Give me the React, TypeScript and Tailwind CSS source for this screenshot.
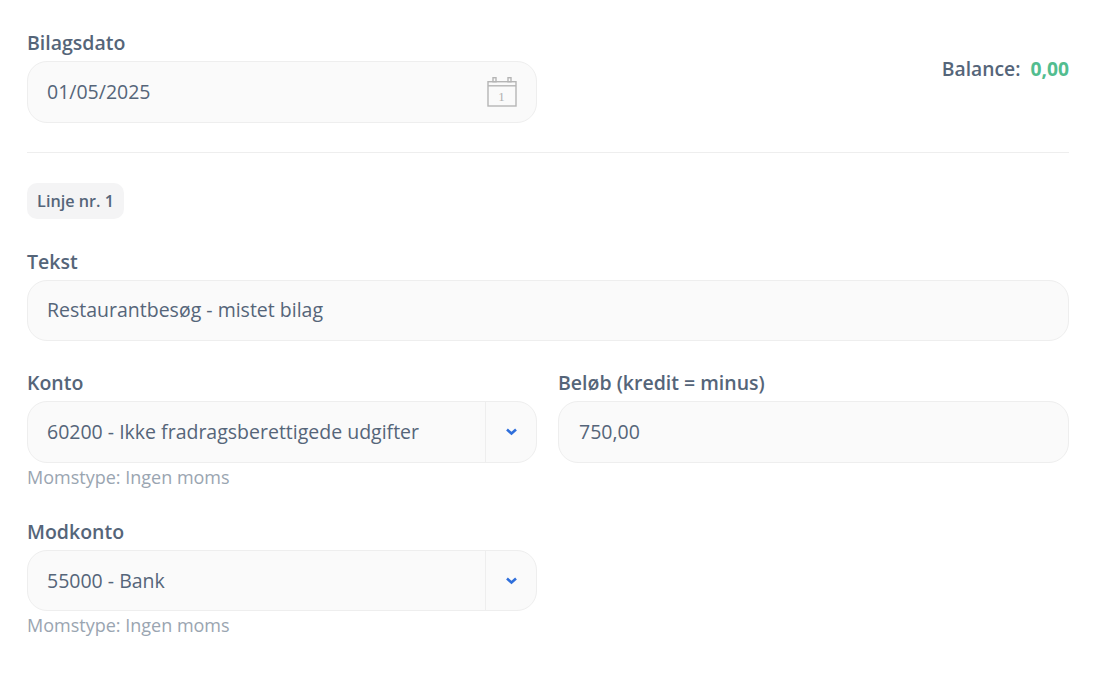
const font = "font-['Open_Sans',sans-serif]";

function Label({ children }: { children: React.ReactNode }) {
  return <label className="block h-[18px] text-[19.5px] leading-[18px] font-semibold text-[#556579]">{children}</label>;
}

function CalendarIcon() {
  return (
    <svg width="32" height="32" viewBox="0 0 32 32" fill="none" stroke="#b5b5b5" strokeWidth="1.4">
      <rect x="3" y="5.7" width="28" height="24.3" fill="#fafafa" />
      <path d="M3 9.8h28" />
      <rect x="8" y="1.7" width="3" height="4" />
      <rect x="23" y="1.7" width="3" height="4" />
      <text x="16.5" y="25" textAnchor="middle" fontFamily="'Liberation Serif', serif" fontSize="13" fill="#b0b0b0" stroke="none">1</text>
    </svg>
  );
}

function TextField({ value, icon }: { value: string; icon?: React.ReactNode }) {
  return (
    <div className="mt-[9px] flex h-[62px] items-center justify-between rounded-[20px] border border-[#eeeeee] bg-[#fafafa] pl-[19px] pr-[19px] text-[19.5px] text-[#556579]">
      <span>{value}</span>
      {icon}
    </div>
  );
}

function SelectField({ value }: { value: string }) {
  return (
    <div className="mt-[9px] flex h-[62px] items-center rounded-[20px] border border-[#eeeeee] bg-[#fafafa] text-[19.5px] text-[#556579]">
      <span className="flex-1 pl-[19px]">{value}</span>
      <div className="flex h-full w-[51px] items-center justify-center border-l border-[#eeeeee]">
        <svg width="11" height="8" viewBox="0 0 11 8" fill="none" stroke="#2f6fdb" strokeWidth="2.6">
          <path d="M1 1.5l4.5 4 4.5-4" />
        </svg>
      </div>
    </div>
  );
}

function Hint() {
  return <p className="mt-[2px] text-[18px] leading-[24px] text-[#9aa5b1]">Momstype: Ingen moms</p>;
}

export default function App() {
  return (
    <div className={`${font} min-h-[676px] bg-white pl-[27px] pr-[29px] pt-[34px]`}>
      <div className="flex items-start justify-between">
        <div className="w-[510px]">
          <Label>Bilagsdato</Label>
          <TextField value="01/05/2025" icon={<CalendarIcon />} />
        </div>
        <div className="mt-[26px] flex text-[19.3px] leading-[18px] font-semibold text-[#556579]">
          <span>Balance:</span>
          <span className="ml-[10px] font-bold text-[#52bd8f]">0,00</span>
        </div>
      </div>

      <div className="mt-[29px] border-t border-[#eeeeee]" />

      <div className="mt-[30px] flex h-[36px] w-[97px] items-center justify-center rounded-[10px] bg-[#f4f4f5] text-[16.2px] font-semibold text-[#556579]">
        Linje nr. 1
      </div>

      <div className="mt-[34px]">
        <Label>Tekst</Label>
        <div className="[&>div]:h-[61px] [&>div]:pb-[1px]">
          <TextField value="Restaurantbesøg - mistet bilag" />
        </div>
      </div>

      <div className="mt-[33px] grid grid-cols-[510px_511px] gap-x-[21px]">
        <div>
          <Label>Konto</Label>
          <SelectField value="60200 - Ikke fradragsberettigede udgifter" />
          <Hint />
        </div>
        <div className="[&>div]:pl-[20px]">
          <Label>Beløb (kredit = minus)</Label>
          <TextField value="750,00" />
        </div>
      </div>

      <div className="mt-[34px] w-[510px]">
        <Label>Modkonto</Label>
        <div className="[&>div:first-child]:h-[61px]">
          <SelectField value="55000 - Bank" />
          <Hint />
        </div>
      </div>
    </div>
  );
}
